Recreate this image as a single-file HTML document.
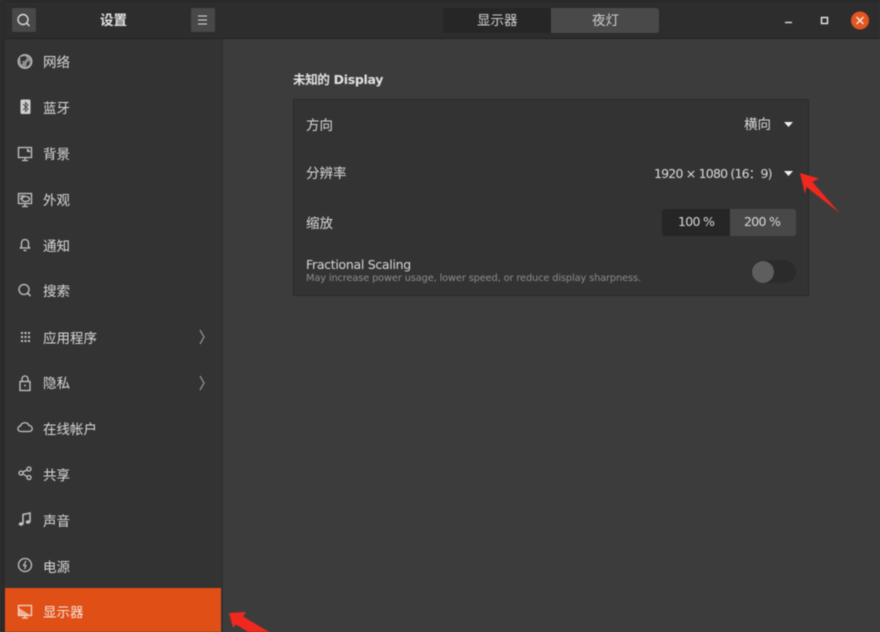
<!DOCTYPE html>
<html><head><meta charset="utf-8">
<style>
html,body{margin:0;padding:0;background:#3c3c3c}
#a{position:relative;width:880px;height:632px;overflow:hidden;background:#3c3c3c;font-family:"Liberation Sans","Noto Sans CJK SC",sans-serif;color:#dcdcdc;filter:blur(.45px)}
#a div{position:absolute;white-space:nowrap}
.t{font-size:13.5px;line-height:20px;height:20px;left:43px;color:#dadada}
svg{position:absolute;overflow:visible}
</style></head><body>
<div id="a">
<div style="left:0;top:0;width:880px;height:39px;background:#2d2d2d"></div>
<div style="left:0;top:0;width:880px;height:2px;background:#262626"></div>
<div style="left:0;top:38px;width:880px;height:1px;background:#232323"></div>
<div style="left:0;top:0;width:5px;height:632px;background:#2a2b2a"></div>
<div style="left:5px;top:39px;width:217px;height:593px;background:#333333"></div>
<div style="left:222px;top:39px;width:1px;height:593px;background:#2f2f2f"></div>

<div style="left:12px;top:8px;width:24px;height:24px;background:#484848;border-radius:2px"></div>
<svg style="left:0;top:0" width="40" height="40"><circle cx="23" cy="19.5" r="5" fill="none" stroke="#d8d8d8" stroke-width="1.4"/><path d="M26.5 23l3 3" stroke="#d8d8d8" stroke-width="1.5"/></svg>
<div style="left:100px;top:11px;font-size:13.5px;line-height:20px;font-weight:bold;color:#e4e4e4">设置</div>
<div style="left:191px;top:8px;width:24px;height:24px;background:#484848;border-radius:2px"></div>
<svg style="left:0;top:0" width="220" height="40"><path d="M198 16h9M198 20h9M198 24h9" stroke="#dcdcdc" stroke-width="1"/></svg>

<div style="left:443px;top:8px;width:108px;height:25px;background:#262626;border-radius:3px 0 0 3px"></div>
<div style="left:551px;top:8px;width:108px;height:25px;background:#494949;border-radius:0 3px 3px 0"></div>
<div style="left:477px;top:11px;font-size:13.5px;line-height:20px;color:#d0d0d0">显示器</div>
<div style="left:592px;top:11px;font-size:13.5px;line-height:20px;color:#cfcfcf">夜灯</div>
<svg style="left:0;top:0" width="880" height="40"><path d="M785 22.500h7" stroke="#e0e0e0" stroke-width="1.4"/><rect x="821.500" y="17.500" width="6" height="6" fill="none" stroke="#e8e8e8" stroke-width="1.400"/><circle cx="860" cy="20.500" r="9" fill="#e2561f"/><path d="M856.500 17l7 7M863.500 17l-7 7" stroke="#f4e4da" stroke-width="1.500"/></svg>

<div class="t" style="top:53px">网络</div>
<div class="t" style="top:99px">蓝牙</div>
<div class="t" style="top:145px">背景</div>
<div class="t" style="top:191px">外观</div>
<div class="t" style="top:237px">通知</div>
<div class="t" style="top:282px">搜索</div>
<div class="t" style="top:329px">应用程序</div>
<div class="t" style="top:374px">隐私</div>
<div class="t" style="top:420px">在线帐户</div>
<div class="t" style="top:466px">共享</div>
<div class="t" style="top:512px">声音</div>
<div class="t" style="top:558px">电源</div>
<div style="left:5px;top:588px;width:216px;height:44px;background:#e04f16"></div>
<div class="t" style="top:603px;color:#f6e6dc">显示器</div>

<svg style="left:0;top:0" width="222" height="632" fill="none" stroke="#c4c4c4" stroke-width="1.3">
<circle cx="25" cy="61.500" r="6.800" fill="#8f8f8f" stroke="#c4c4c4" stroke-width="1.200"/><path d="M20 57l5-1 2 2-2 3-3 0 1 3-2 0zM27 62l3-1-1 4-3 2z" fill="#333" stroke="none"/>
<rect x="20.500" y="99.500" width="10" height="14.500" rx="1.500" fill="#cfcfcf" stroke="none"/><path d="M23 104l5 5-2.500 2.500v-9l2.500 2.500-5 5" stroke="#444" stroke-width=".9"/>
<path d="M18.500 147.500h13v10h-13z"/><path d="M22 160.500h6M25 158v2"/><path d="M27 148l4 4h-4z" fill="#c4c4c4" stroke="none"/>
<path d="M18.500 193.500h13v10h-13z"/><path d="M22 206.500h6M25 204v2M20 196h5M20 198.500h3"/><ellipse cx="25.500" cy="199" rx="4" ry="2.500"/>
<path d="M25 239.500c2.500 0 3.500 2 3.500 4v3l1 1.500h-9l1-1.500v-3c0-2 1-4 3.500-4z"/><path d="M23.500 250.500h3"/>
<circle cx="24" cy="289.500" r="5"/><path d="M27.500 293l3 3" stroke-width="1.500"/>
<g fill="#c4c4c4" stroke="none"><rect x="21" y="332" width="2" height="2"/><rect x="24.500" y="332" width="2" height="2"/><rect x="28" y="332" width="2" height="2"/><rect x="21" y="336" width="2" height="2"/><rect x="24.500" y="336" width="2" height="2"/><rect x="28" y="336" width="2" height="2"/><rect x="21" y="340" width="2" height="2"/><rect x="24.500" y="340" width="2" height="2"/><rect x="28" y="340" width="2" height="2"/></g>
<rect x="20" y="381.500" width="10" height="9"/><path d="M22 381.500v-2.500c0-4 6-4 6 0v2.500"/><path d="M25 384.500v2"/>
<path d="M21 431.500c-4 0-4-5-.5-5.500 1-4 7-4.500 8.500-.5 4 0 4.500 6 0 6z"/>
<circle cx="21" cy="473" r="2"/><circle cx="29" cy="469" r="2"/><circle cx="29" cy="477.500" r="2"/><path d="M23 472l4-2M23 474l4 2.500"/>
<path d="M23 524v-9.500l7-1.500v9" stroke-width="1.500"/><ellipse cx="21" cy="524" rx="2.300" ry="1.800" fill="#c4c4c4" stroke="none"/><ellipse cx="28" cy="522" rx="2.300" ry="1.800" fill="#c4c4c4" stroke="none"/>
<circle cx="25" cy="565" r="6.500"/><path d="M26 561l-2.500 4.500h2.500l-1.500 3.500" stroke-width="1.200"/>
<path d="M18.500 605.500h13v10h-13z" stroke="#f2d8c8"/><path d="M22 618h6M25 615.500v2.500" stroke="#f2d8c8"/><path d="M19 608l11 7h-11z" fill="#f2d8c8" stroke="none" opacity=".7"/>
<path d="M200 330l4 7-4 7M200 376l4 7-4 7" stroke="#a8a8a8" stroke-width="1"/>
</svg>

<div style="left:293px;top:70px;font-size:12.500px;line-height:20px;font-weight:bold;color:#e2e2e2;font-family:'DejaVu Sans','Noto Sans CJK SC',sans-serif;letter-spacing:-.3px">未知的 Display</div>
<div style="left:293px;top:99px;width:516px;height:197px;background:#333333;border:1px solid #292929;box-sizing:border-box"></div>
<div style="left:306px;top:116px;font-size:13.500px;line-height:20px;color:#dadada">方向</div>
<div style="left:306px;top:164px;font-size:13.500px;line-height:20px;color:#dadada">分辨率</div>
<div style="left:306px;top:214px;font-size:13.500px;line-height:20px;color:#dadada">缩放</div>
<div style="left:306px;top:256px;font-size:12.500px;line-height:18px;color:#d8d8d8;font-family:'DejaVu Sans',sans-serif;letter-spacing:-.3px">Fractional Scaling</div>
<div style="left:306px;top:272px;font-size:9.800px;line-height:14px;color:#8c8c8c;font-family:'DejaVu Sans',sans-serif;letter-spacing:-.13px">May increase power usage, lower speed, or reduce display sharpness.</div>
<div style="left:744px;top:115px;font-size:13.500px;line-height:20px;color:#dadada">横向</div>
<div style="left:654px;top:164px;font-size:12.500px;line-height:20px;color:#dcdcdc;font-family:'DejaVu Sans','Noto Sans CJK SC',sans-serif;letter-spacing:-.8px">1920 × 1080 (16：9)</div>
<svg style="left:0;top:0" width="880" height="632"><path d="M784 122h9l-4.500 5zM784 171h9l-4.500 5z" fill="#f0f0f0"/></svg>
<div style="left:662px;top:209px;width:68px;height:27px;background:#262626;border-radius:3px 0 0 3px"></div>
<div style="left:730px;top:209px;width:66px;height:27px;background:#484848;border-radius:0 3px 3px 0"></div>
<div style="left:678px;top:212px;font-size:12.500px;line-height:20px;color:#d8d8d8;font-family:'DejaVu Sans',sans-serif;letter-spacing:-.7px">100 %</div>
<div style="left:744px;top:212px;font-size:12.500px;line-height:20px;color:#d8d8d8;font-family:'DejaVu Sans',sans-serif;letter-spacing:-.7px">200 %</div>
<div style="left:751px;top:260px;width:45px;height:23px;background:#2b2b2b;border-radius:12px"></div>
<div style="left:752px;top:261px;width:22px;height:22px;background:#5e5e5e;border-radius:50%"></div>

<svg style="left:0;top:0" width="880" height="632">
<path d="M800 173l19 5.500-6.500 3.500 27 31-33-26-1.500 7z" fill="#f0281e"/>
<path d="M229 613l17-1-3 4.500 27 16h-21l-13-8-3 3z" fill="#f0281e"/>
</svg>
</div>
</body></html>
